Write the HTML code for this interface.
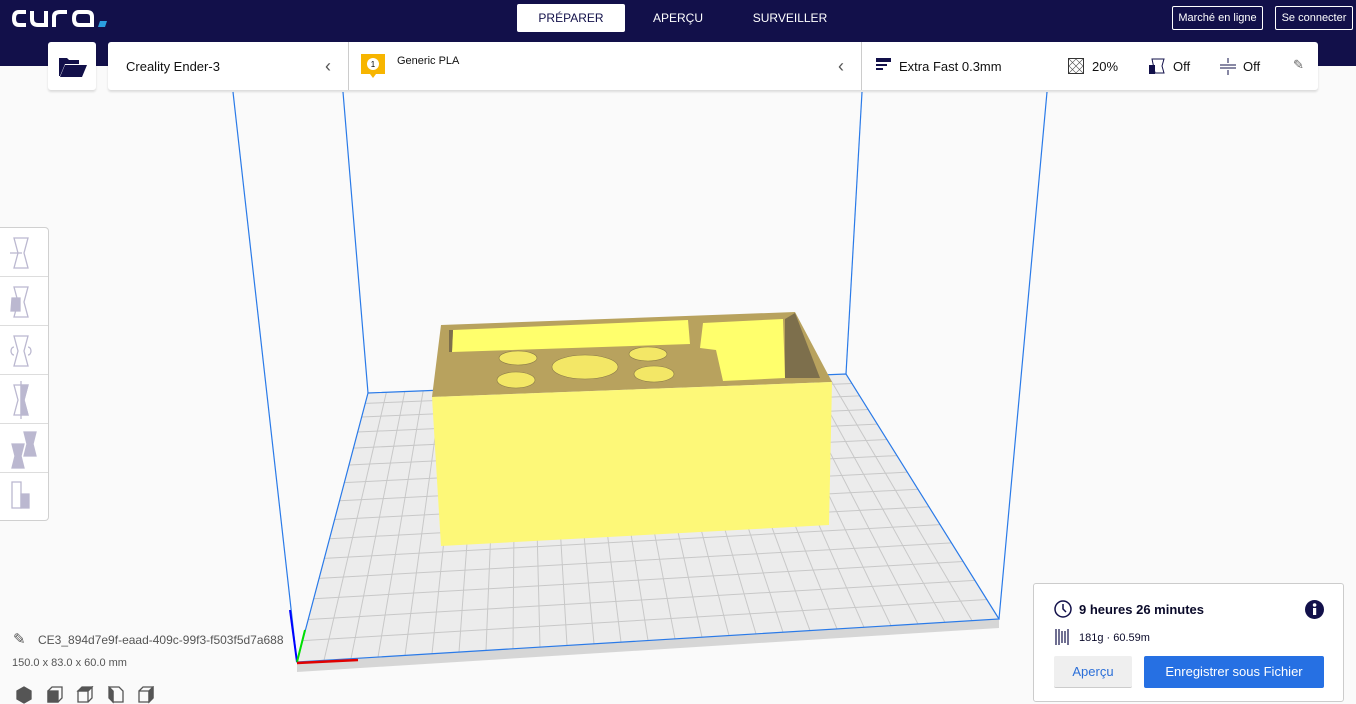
<!DOCTYPE html>
<html><head><meta charset="utf-8"><style>
*{margin:0;padding:0;box-sizing:border-box}
body{width:1356px;height:704px;overflow:hidden;background:#fafafa;font-family:"Liberation Sans",sans-serif;position:relative;color:#0a0a2a}
.hdr{position:absolute;left:0;top:0;width:1356px;height:66px;background:#12104a}
.tab{position:absolute;top:4px;height:28px;line-height:28px;font-size:12px;color:#fff;text-align:center}
.btn{position:absolute;top:6px;height:24px;line-height:22px;border:1px solid #fff;border-radius:2px;color:#fff;font-size:11px;text-align:center}
.card{position:absolute;background:#fff;border-radius:3px;box-shadow:0 2px 2px rgba(0,0,0,.12)}
.t{position:absolute;font-size:13px;color:#111}
.side{position:absolute;left:0;top:227px;width:49px;height:294px;background:#fff;border:1px solid #d0d0d0;border-left:none;border-radius:0 4px 4px 0}
.side div{height:49px;border-bottom:1px solid #ddd}
</style></head><body>
<div class="hdr"></div>
<svg style="position:absolute;left:12px;top:8px" width="100" height="22" viewBox="0 0 100 22">
<g fill="none" stroke="#fff" stroke-width="4"><path d="M14 4H7Q2 4 2 10.5Q2 17 7 17H14"/><path d="M20 3V11Q20 17 26 17H34V3"/><path d="M42 19V9Q42 4 48 4H55"/><path d="M80 19V9Q80 4 75 4H67Q62 4 62 10.5Q62 17 67 17H80"/></g>
<path d="M88 13h7l-2 6h-7z" fill="#2b9fe0"/></svg>
<div class="tab" style="left:517px;width:108px;background:#fff;color:#12104a;border-radius:2px">PRÉPARER</div>
<div class="tab" style="left:640px;width:76px">APERÇU</div>
<div class="tab" style="left:740px;width:100px">SURVEILLER</div>
<div class="btn" style="left:1172px;width:91px">Marché en ligne</div>
<div class="btn" style="left:1275px;width:78px">Se connecter</div>

<svg style="position:absolute;left:0;top:0" width="1356" height="704" id="sc">
<g stroke="#2a7ae8" stroke-width="1.2" fill="none">
<line x1="233" y1="92" x2="297" y2="662"/><line x1="343" y1="92" x2="368" y2="393"/>
<line x1="1047" y1="92" x2="999" y2="619"/><line x1="862" y1="92" x2="846" y2="374"/></g>
<polygon points="297,662 999,619 999,628 297,672" fill="#d6d6d6"/>
<polygon points="368,393 846,374 999,619 297,662" fill="#ececec"/>
<g id="grid" stroke="#c8c8c8" stroke-width="1"></g>
<polygon points="368,393 846,374 999,619 297,662" fill="none" stroke="#2a7ae8" stroke-width="1.2"/>
<line x1="297" y1="662" x2="290" y2="610" stroke="#0000ff" stroke-width="2"/>
<line x1="297" y1="662" x2="305" y2="630" stroke="#00e000" stroke-width="2"/>
<line x1="297" y1="663" x2="358" y2="660" stroke="#e00000" stroke-width="2.5"/>
<polygon points="441,325 795,312 832,382 432,397" fill="#b8a25e"/>
<polygon points="453,330 688,320 690,344 452,352" fill="#ffff6c"/>
<polygon points="703,323 783,319 785,378 723,381 716,350 700,348" fill="#ffff6c"/>
<polygon points="785,319 795,313 820,378 785,378" fill="#7d6f4c"/>
<polygon points="449,330 453,330 452,352 449,352" fill="#7d6f4c"/>
<g fill="#f3e766" stroke="#8a7a48" stroke-width=".6"><ellipse cx="518" cy="358" rx="19" ry="7"/><ellipse cx="516" cy="380" rx="19" ry="8"/><ellipse cx="585" cy="367" rx="33" ry="12"/><ellipse cx="648" cy="354" rx="19" ry="7"/><ellipse cx="654" cy="374" rx="20" ry="8"/></g>
<polygon points="432,397 832,382 829,525 441,546" fill="#fdf878"/>
</svg>
<script>
var g=document.getElementById('grid'),s='';
function L(a,b,t){return[a[0]+(b[0]-a[0])*t,a[1]+(b[1]-a[1])*t]}
var BL=[368,393],BR=[846,374],FR=[999,619],FL=[297,662];
for(var i=1;i<26;i++){var t=i/26,p=L(BL,BR,t),q=L(FL,FR,t);s+='<line x1="'+p[0]+'" y1="'+p[1]+'" x2="'+q[0]+'" y2="'+q[1]+'"/>';}
for(var j=1;j<15;j++){var u=j/15,tt=Math.pow(u,1.2),p=L(BL,FL,tt),q=L(BR,FR,tt);s+='<line x1="'+p[0]+'" y1="'+p[1]+'" x2="'+q[0]+'" y2="'+q[1]+'"/>';}
g.innerHTML=s;
</script>

<div class="card" style="left:48px;top:42px;width:48px;height:48px"></div>
<svg style="position:absolute;left:58px;top:56px" width="30" height="22" viewBox="0 0 30 22"><path d="M1 2h8l2 2h10v4H7L2 20H1z" fill="#12104a"/><path d="M7 9h22l-5 12H2z" fill="#12104a"/></svg>
<div class="card" style="left:108px;top:42px;width:1210px;height:48px"></div>
<div style="position:absolute;left:348px;top:42px;width:1px;height:48px;background:#ccc"></div>
<div style="position:absolute;left:861px;top:42px;width:1px;height:48px;background:#ccc"></div>
<div class="t" style="left:126px;top:59px">Creality Ender-3</div>
<div class="t" style="left:325px;top:56px;font-size:18px;color:#555">‹</div>
<div class="t" style="left:838px;top:56px;font-size:18px;color:#555">‹</div>
<svg style="position:absolute;left:361px;top:54px" width="24" height="24"><path d="M0 0h24v20h-9l-3 4-3-4H0z" fill="#f7b500"/><circle cx="12" cy="10" r="6" fill="#fff"/><text x="12" y="13" font-size="8" text-anchor="middle" font-family="Liberation Sans">1</text></svg>
<div class="t" style="left:397px;top:55px;font-size:11px">Generic PLA</div>
<svg style="position:absolute;left:876px;top:58px" width="16" height="16"><rect x="0" y="0" width="15" height="4" fill="#12104a"/><rect x="0" y="6" width="11" height="2" fill="#12104a"/><rect x="0" y="10" width="7" height="2" fill="#12104a"/></svg>
<div class="t" style="left:899px;top:59px">Extra Fast 0.3mm</div>
<svg style="position:absolute;left:1068px;top:58px" width="16" height="16"><rect x="0.5" y="0.5" width="15" height="15" fill="none" stroke="#333"/><path d="M1 8L8 1 15 8 8 15zM1 1l14 14M15 1L1 15" stroke="#555" stroke-width=".6" fill="none"/></svg>
<div class="t" style="left:1092px;top:59px">20%</div>
<svg style="position:absolute;left:1149px;top:58px" width="16" height="16"><path d="M3 1h12l-2 7 2 7H6z" fill="none" stroke="#12104a"/><path d="M0 7h6v9H0z" fill="#12104a"/></svg>
<div class="t" style="left:1173px;top:59px">Off</div>
<svg style="position:absolute;left:1220px;top:57px" width="16" height="18"><path d="M0 8h16M0 11h16M8 1v5M8 13v5" stroke="#12104a" fill="none"/></svg>
<div class="t" style="left:1243px;top:59px">Off</div>
<div class="t" style="left:1293px;top:57px;color:#666;font-size:13px">✎</div>

<div class="side"><div></div><div></div><div></div><div></div><div></div><div style="border:none"></div></div>
<svg style="position:absolute;left:8px;top:236px" width="32" height="280" fill="none" stroke="#bbb8d0" stroke-width="1.3">
<path d="M6 2h14l-4 15 4 15H6l4-15z"/><path d="M2 17h12" /><path d="M6 51h14l-4 15 4 15H6l4-15z"/><path d="M4 62h8v13H3z" fill="#bbb8d0"/>
<path d="M6 100h14l-4 15 4 15H6l4-15z"/><path d="M6 111a3 4 0 1 0 0 8M20 111a3 4 0 1 1 0 8"/>
<path d="M6 149h14l-4 15 4 15H6l4-15z"/><path d="M13 149h7l-4 15 4 15h-7z" fill="#bbb8d0"/><path d="M13 145v38"/>
<path d="M16 196h12l-3 12 3 12H16l3-12z" fill="#bbb8d0"/><path d="M4 208h12l-3 12 3 12H4l3-12z" fill="#bbb8d0"/>
<path d="M4 246h9v26H4z"/><path d="M13 258h8v14h-8z" fill="#bbb8d0"/></svg>

<div style="position:absolute;left:13px;top:630px;font-size:15px;color:#555">✎</div>
<div style="position:absolute;left:38px;top:633px;font-size:12px;color:#555">CE3_894d7e9f-eaad-409c-99f3-f503f5d7a688</div>
<div style="position:absolute;left:12px;top:657px;font-size:11px;color:#555">150.0 x 83.0 x 60.0 mm</div>
<svg style="position:absolute;left:15px;top:686px" width="140" height="18" fill="none" stroke="#555" stroke-width="1.3">
<path d="M2 5l7-4 7 4v8l-7 4-7-4z" fill="#555"/>
<g transform="translate(31 0)"><path d="M2 5l4-4h10v11l-4 4H2z"/><rect x="2" y="5" width="10" height="11" fill="#555"/></g>
<g transform="translate(61 0)"><path d="M2 5l4-4h10l-4 4z" fill="#555"/><path d="M2 5h10v11H2zM12 5l4-4v11l-4 4"/></g>
<g transform="translate(92 0)"><path d="M2 1v11l4 4V5z" fill="#555"/><path d="M2 1h10l4 4v11H6V5"/></g>
<g transform="translate(122 0)"><path d="M2 5h10v11H2zM2 5l4-4h10v11l-4 4"/><path d="M12 5l4-4v11l-4 4z" fill="#555"/></g></svg>

<div style="position:absolute;left:1033px;top:583px;width:311px;height:119px;background:#fff;border:1px solid #ccc;border-radius:3px"></div>
<svg style="position:absolute;left:1054px;top:600px" width="18" height="18"><circle cx="9" cy="9" r="8" fill="none" stroke="#12104a" stroke-width="1.5"/><path d="M9 4v5l3 3" stroke="#12104a" stroke-width="1.5" fill="none"/></svg>
<div style="position:absolute;left:1079px;top:602px;font-size:13px;font-weight:bold">9 heures 26 minutes</div>
<svg style="position:absolute;left:1305px;top:600px" width="19" height="19"><circle cx="9.5" cy="9.5" r="9.5" fill="#12104a"/><rect x="8" y="8" width="3.2" height="7" fill="#fff"/><circle cx="9.6" cy="5" r="1.8" fill="#fff"/></svg>
<svg style="position:absolute;left:1055px;top:628px" width="16" height="18" stroke="#12104a" stroke-width="1.2"><path d="M1 1v16M4 1v16M7 3v12M10 3v12M13 1v16"/></svg>
<div style="position:absolute;left:1079px;top:632px;font-size:11px">181g · 60.59m</div>
<div style="position:absolute;left:1054px;top:656px;width:78px;height:32px;background:#efefef;border-bottom:1px solid #ccc;border-radius:2px;color:#2b6fd8;font-size:13px;text-align:center;line-height:31px">Aperçu</div>
<div style="position:absolute;left:1144px;top:656px;width:180px;height:32px;background:#2670e3;border-radius:2px;color:#fff;font-size:13px;text-align:center;line-height:31px">Enregistrer sous Fichier</div>
</body></html>
